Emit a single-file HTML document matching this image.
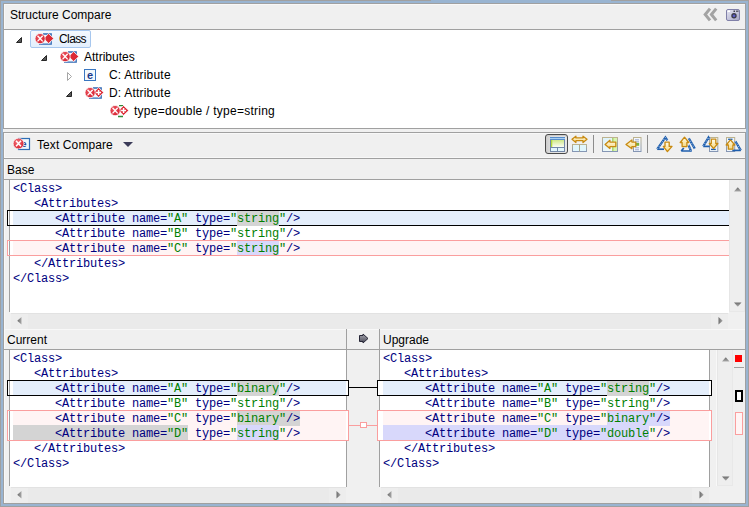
<!DOCTYPE html><html><head><meta charset="utf-8"><style>
html,body{margin:0;padding:0;width:749px;height:507px;overflow:hidden;background:#a0a0a0}
.a{position:absolute}
.ui{font-family:"Liberation Sans",sans-serif;font-size:12px;line-height:14px;color:#000;white-space:nowrap}
.m{font-family:"Liberation Mono",monospace;font-size:12px;letter-spacing:-0.2px;line-height:15px;white-space:pre;color:#000080}
.m .n{color:#000080}
.m .g{color:#008000}
</style></head><body><div class="a" style="left:0px;top:0px;width:749px;height:507px;background:#a0a0a0;"></div>
<div class="a" style="left:1px;top:1px;width:747px;height:505px;background:#99b4d1;"></div>
<div class="a" style="left:431px;top:0px;width:180px;height:1px;background:#99b4d1;"></div>
<div class="a" style="left:3px;top:3px;width:743px;height:126px;background:#a0a0a0;"></div>
<div class="a" style="left:4px;top:4px;width:741px;height:124px;background:#ffffff;"></div>
<div class="a" style="left:4px;top:4px;width:741px;height:25px;background:#f0f0f0;"></div>
<div class="a" style="left:4px;top:4px;width:741px;height:1px;background:#f8f8f8;"></div>
<div class="a" style="left:4px;top:4px;width:1px;height:25px;background:#f8f8f8;"></div>
<div class="a" style="left:4px;top:29px;width:741px;height:1px;background:#a0a0a0;"></div>
<div class="a" style="left:3px;top:129px;width:743px;height:3px;background:#f0f0f0;"></div>
<div class="a" style="left:3px;top:132px;width:743px;height:372px;background:#a0a0a0;"></div>
<div class="a" style="left:4px;top:133px;width:741px;height:370px;background:#f0f0f0;"></div>
<div class="a" style="left:4px;top:133px;width:741px;height:1px;background:#f8f8f8;"></div>
<div class="a" style="left:4px;top:133px;width:1px;height:370px;background:#f8f8f8;"></div>
<div class="a ui" style="left:10px;top:8px;">Structure Compare</div>
<div class="a" style="left:30px;top:30px;width:59px;height:16px;border:1px solid #a7c7ee;border-radius:2px;background:linear-gradient(#f4f9fe,#e3effc)"></div>
<svg class="a" style="left:16px;top:37px" width="7" height="7"><path d="M0.5 5.5 L5.5 0.5 L5.5 5.5 Z" fill="#595959" stroke="#262626" stroke-width="1" stroke-linejoin="round"/></svg>
<svg class="a" style="left:35px;top:33px" width="21" height="14"><defs><radialGradient id="rg35_33" cx="0.4" cy="0.4" r="0.65"><stop offset="0" stop-color="#ee5a66"/><stop offset="1" stop-color="#d41c2a"/></radialGradient></defs><path d="M8 1 H16.2 V11.2 H4" fill="#f4f8fc" stroke="#3068b4" stroke-width="1.3"/><path d="M8.6 5.5 L13.6 0.6 L18.8 5.5 L13.6 10.4 Z" fill="#dc2a36" stroke="#ffffff" stroke-width="0.8"/><circle cx="5.1" cy="5.6" r="5.1" fill="url(#rg35_33)" stroke="#ffffff" stroke-width="0.8"/><path d="M2.5 2.8 L7.7 8.4 M7.7 2.8 L2.5 8.4" stroke="#fff" stroke-width="1.3"/></svg>
<div class="a ui tr" style="left:59px;top:32px;letter-spacing:-0.6px">Class</div>
<svg class="a" style="left:41px;top:55px" width="7" height="7"><path d="M0.5 5.5 L5.5 0.5 L5.5 5.5 Z" fill="#595959" stroke="#262626" stroke-width="1" stroke-linejoin="round"/></svg>
<svg class="a" style="left:60px;top:51px" width="21" height="14"><defs><radialGradient id="rg60_51" cx="0.4" cy="0.4" r="0.65"><stop offset="0" stop-color="#ee5a66"/><stop offset="1" stop-color="#d41c2a"/></radialGradient></defs><path d="M8 1 H16.2 V11.2 H4" fill="#f4f8fc" stroke="#3068b4" stroke-width="1.3"/><path d="M8.6 5.5 L13.6 0.6 L18.8 5.5 L13.6 10.4 Z" fill="#dc2a36" stroke="#ffffff" stroke-width="0.8"/><circle cx="5.1" cy="5.6" r="5.1" fill="url(#rg60_51)" stroke="#ffffff" stroke-width="0.8"/><path d="M2.5 2.8 L7.7 8.4 M7.7 2.8 L2.5 8.4" stroke="#fff" stroke-width="1.3"/></svg>
<div class="a ui tr" style="left:84px;top:50px;">Attributes</div>
<svg class="a" style="left:67px;top:72px" width="7" height="10"><path d="M0.5 0.5 L4.5 4.5 L0.5 8.5 Z" fill="#ffffff" stroke="#a6a6a6" stroke-width="1"/></svg>
<svg class="a" style="left:84px;top:69px" width="12" height="12"><rect x="0.5" y="0.5" width="11" height="11" fill="#f2f8fc" stroke="#3a76c0" stroke-width="1"/><text x="6" y="9.6" text-anchor="middle" font-family="Liberation Sans" font-weight="bold" font-size="11" fill="#1a3a8a">e</text></svg>
<div class="a ui tr" style="left:109px;top:68px;letter-spacing:0.2px">C: Attribute</div>
<svg class="a" style="left:66px;top:91px" width="7" height="7"><path d="M0.5 5.5 L5.5 0.5 L5.5 5.5 Z" fill="#595959" stroke="#262626" stroke-width="1" stroke-linejoin="round"/></svg>
<svg class="a" style="left:85px;top:87px" width="21" height="14"><defs><radialGradient id="rg85_87" cx="0.4" cy="0.4" r="0.65"><stop offset="0" stop-color="#ee5a66"/><stop offset="1" stop-color="#d41c2a"/></radialGradient></defs><path d="M8 1 H16.2 V11.2 H4" fill="#f4f8fc" stroke="#3068b4" stroke-width="1.3"/><path d="M8.6 5.5 L13.6 0.6 L18.8 5.5 L13.6 10.4 Z" fill="#dc2a36" stroke="#ffffff" stroke-width="0.8"/><path d="M13.6 3 V8 M11.1 5.5 H16.1" stroke="#fff" stroke-width="1.5"/><circle cx="5.1" cy="5.6" r="5.1" fill="url(#rg85_87)" stroke="#ffffff" stroke-width="0.8"/><path d="M2.5 2.8 L7.7 8.4 M7.7 2.8 L2.5 8.4" stroke="#fff" stroke-width="1.3"/></svg>
<div class="a ui tr" style="left:109px;top:86px;letter-spacing:0.2px">D: Attribute</div>
<svg class="a" style="left:110px;top:105px" width="21" height="14"><defs><radialGradient id="rg110_105" cx="0.4" cy="0.4" r="0.65"><stop offset="0" stop-color="#ee5a66"/><stop offset="1" stop-color="#d41c2a"/></radialGradient></defs><path d="M9 0.7 H13 M8 11.5 H13" fill="none" stroke="#2f8a3a" stroke-width="1.3"/><path d="M8.6 5.5 L13.6 0.6 L18.8 5.5 L13.6 10.4 Z" fill="#dc2a36" stroke="#ffffff" stroke-width="0.8"/><path d="M13.6 3 V8 M11.1 5.5 H16.1" stroke="#fff" stroke-width="1.5"/><circle cx="5.1" cy="5.6" r="5.1" fill="url(#rg110_105)" stroke="#ffffff" stroke-width="0.8"/><path d="M2.5 2.8 L7.7 8.4 M7.7 2.8 L2.5 8.4" stroke="#fff" stroke-width="1.3"/></svg>
<div class="a ui tr" style="left:134px;top:104px;letter-spacing:0.25px">type=double / type=string</div>
<svg class="a" style="left:700px;top:6px" width="20" height="18"><path d="M10 2.6 L5.2 8.5 L10 14.4 M16.2 2.6 L11.4 8.5 L16.2 14.4" fill="none" stroke="#a3a3a3" stroke-width="3"/></svg>
<svg class="a" style="left:725px;top:8px" width="16" height="14"><defs><linearGradient id="cam" x1="0" y1="0" x2="1" y2="1"><stop offset="0" stop-color="#e8e8f4"/><stop offset="1" stop-color="#a4a4c4"/></linearGradient></defs><rect x="1.5" y="1.5" width="13" height="11" rx="1.5" fill="url(#cam)" stroke="#8080a8" stroke-width="1"/><path d="M2.5 2.5 H5 V4 H2.5 Z" fill="#ffffff"/><rect x="8.5" y="2.5" width="1.5" height="1.5" fill="#404050"/><rect x="11" y="2.5" width="2.5" height="1.5" fill="#606070"/><circle cx="9" cy="7.8" r="2.7" fill="#3a3a48"/><circle cx="9" cy="7.8" r="1.4" fill="#5c5cc8"/></svg>
<div class="a" style="left:4px;top:157px;width:741px;height:1px;background:#f8f8f8;"></div>
<div class="a" style="left:4px;top:158px;width:741px;height:1px;background:#a0a0a0;"></div>
<svg class="a" style="left:12px;top:137px" width="20" height="14"><rect x="6.5" y="1.5" width="11" height="11" fill="#eef7fc" stroke="#2f6db4" stroke-width="1.2"/><text x="12" y="10" text-anchor="middle" font-family="Liberation Sans" font-weight="bold" font-size="9" fill="#1f3f8f">e</text><defs><radialGradient id="rgt" cx="0.4" cy="0.35" r="0.7"><stop offset="0" stop-color="#f3737b"/><stop offset="1" stop-color="#d81e2c"/></radialGradient></defs><circle cx="6.5" cy="6.5" r="5.3" fill="url(#rgt)" stroke="#fff" stroke-width="0.6"/><path d="M4 3.8 L9 9.2 M9 3.8 L4 9.2" stroke="#fff" stroke-width="1.5"/></svg>
<div class="a ui" style="left:37px;top:138px;letter-spacing:0.1px">Text Compare</div>
<svg class="a" style="left:122px;top:141px" width="12" height="8"><path d="M1 1 H11 L6 6 Z" fill="#3b3b58"/></svg>
<div class="a" style="left:545px;top:134px;width:21px;height:18px;border:1px solid #4a4a4a;border-radius:3px;background:linear-gradient(90deg,#cdcdcd,#e0e0e0 25%,#e8e8e8);box-shadow:inset 0 1px 1px #c8c8c8"></div>
<svg class="a" style="left:548px;top:134px" width="20" height="20"><defs><linearGradient id="g1" x1="0" y1="0" x2="0" y2="1"><stop offset="0" stop-color="#cfe888"/><stop offset="1" stop-color="#fbfdf4"/></linearGradient><linearGradient id="g1b" x1="0" y1="0" x2="0" y2="1"><stop offset="0" stop-color="#2e6cb8"/><stop offset="0.5" stop-color="#a8d0f4"/><stop offset="1" stop-color="#2e6cb8"/></linearGradient></defs><rect x="2.5" y="3.5" width="14" height="14" fill="#e2f6fc" stroke="#7388a8"/><rect x="2" y="3" width="15" height="3" fill="url(#g1b)"/><rect x="3" y="6" width="13" height="7" fill="url(#g1)"/><rect x="3" y="6" width="1.3" height="7" fill="#b4dc3c"/><path d="M2.5 13.5 H16.5 M9.5 13.5 V17.5" stroke="#7388a8" stroke-width="1"/></svg>
<svg class="a" style="left:570px;top:134px" width="20" height="20"><defs><linearGradient id="af2" x1="0" y1="0" x2="0" y2="1"><stop offset="0" stop-color="#fffdf0"/><stop offset="1" stop-color="#f6d77a"/></linearGradient></defs><path d="M2 5.3 L5.9 2.2 V3.9 H13 V2.2 L17 5.3 L13 8.5 V6.7 H5.9 V8.5 Z" fill="url(#af2)" stroke="#c88a10" stroke-width="1.3" stroke-linejoin="round"/><defs><linearGradient id="db2" x1="0" y1="0" x2="0" y2="1"><stop offset="0" stop-color="#bdb38f"/><stop offset="1" stop-color="#8596b4"/></linearGradient></defs><rect x="2.5" y="10.5" width="14" height="7" fill="#e0f6fd" stroke="url(#db2)"/><path d="M9.5 10.5 V17.5" stroke="#a8a88e"/></svg>
<div class="a" style="left:593px;top:135px;width:1px;height:18px;background:#8c8c8c;"></div>
<svg class="a" style="left:600px;top:134px" width="20" height="20"><defs><linearGradient id="db3" x1="0" y1="0" x2="0" y2="1"><stop offset="0" stop-color="#bdb38f"/><stop offset="1" stop-color="#8596b4"/></linearGradient></defs><defs><linearGradient id="g3" x1="0" y1="0" x2="1" y2="1"><stop offset="0" stop-color="#daf2fc"/><stop offset="1" stop-color="#f8fbf4"/></linearGradient></defs><rect x="2.5" y="3.5" width="15" height="14" fill="url(#g3)" stroke="url(#db3)"/><rect x="13" y="4" width="4" height="13" fill="#d8f4b0"/><path d="M12.8 4 V17" stroke="#9ccc58" stroke-width="1.2"/><defs><linearGradient id="af3" x1="0" y1="0" x2="0" y2="1"><stop offset="0" stop-color="#fffdf0"/><stop offset="1" stop-color="#f6d77a"/></linearGradient></defs><path d="M5.1 10.5 L9.9 6.3 V8.1 H15.8 V12.6 H9.9 V14.6 Z" fill="url(#af3)" stroke="#c88a10" stroke-width="1.3" stroke-linejoin="round"/></svg>
<svg class="a" style="left:624px;top:134px" width="20" height="20"><defs><linearGradient id="db4" x1="0" y1="0" x2="0" y2="1"><stop offset="0" stop-color="#bdb38f"/><stop offset="1" stop-color="#8596b4"/></linearGradient></defs><rect x="9.5" y="3.5" width="7.5" height="14" fill="#f4f8fc" stroke="url(#db4)"/><path d="M11 5.8 H15 M11 7.8 H15 M11 13.8 H15 M11 15.8 H15" stroke="#9aa8d0"/><rect x="11.8" y="8.9" width="3.4" height="2.9" fill="#7cb040"/><defs><linearGradient id="af4" x1="0" y1="0" x2="0" y2="1"><stop offset="0" stop-color="#fffdf0"/><stop offset="1" stop-color="#f6d77a"/></linearGradient></defs><path d="M2 10.5 L7.9 5.9 V8.1 H11.8 V12.6 H7.9 V14.8 Z" fill="url(#af4)" stroke="#c88a10" stroke-width="1.3" stroke-linejoin="round"/></svg>
<div class="a" style="left:647px;top:135px;width:1px;height:18px;background:#8c8c8c;"></div>
<svg class="a" style="left:654px;top:134px" width="20" height="20"><path d="M3.2 15.2 H10" fill="none" stroke="#1f5fae" stroke-width="1.7"/><path d="M3.2 15.2 L11.4 3.4 L13.4 6.3" fill="none" stroke="#1f5fae" stroke-width="2.2"/><path d="M3.2 15.2 L11.4 3.4 L13.4 6.3" fill="none" stroke="#dfe9f6" stroke-width="0.7" stroke-dasharray="1.2 1.6"/><defs><linearGradient id="af5" x1="0" y1="0" x2="0" y2="1"><stop offset="0" stop-color="#fffdf0"/><stop offset="1" stop-color="#f6d77a"/></linearGradient></defs><path d="M11 8.1 H15.2 V12.4 H18 L13.4 17.6 L9.3 12.4 H11 Z" fill="url(#af5)" stroke="#c88a10" stroke-width="1.3" stroke-linejoin="round"/></svg>
<svg class="a" style="left:678px;top:134px" width="20" height="20"><path d="M3.2 17 H13.8 M3.2 17 L5.8 14" fill="none" stroke="#1f5fae" stroke-width="1.7"/><path d="M10.5 11 L13 17 M10.8 4.3 L16.8 14.6" fill="none" stroke="#1f5fae" stroke-width="2.2"/><path d="M10.5 11 L13 17 M10.8 4.3 L16.8 14.6" fill="none" stroke="#dfe9f6" stroke-width="0.7" stroke-dasharray="1.2 1.6"/><defs><linearGradient id="af6" x1="0" y1="0" x2="0" y2="1"><stop offset="0" stop-color="#fffdf0"/><stop offset="1" stop-color="#f6d77a"/></linearGradient></defs><path d="M6.5 3.2 L10.8 8.5 H8.9 V12.6 H4.1 V8.5 H2.2 Z" fill="url(#af6)" stroke="#c88a10" stroke-width="1.3" stroke-linejoin="round"/></svg>
<svg class="a" style="left:701px;top:134px" width="20" height="20"><defs><linearGradient id="db7" x1="0" y1="0" x2="0" y2="1"><stop offset="0" stop-color="#bdb38f"/><stop offset="1" stop-color="#8596b4"/></linearGradient></defs><rect x="8.5" y="3.5" width="8.3" height="14" fill="#eef4fa" stroke="url(#db7)"/><path d="M2.2 12.4 H8.7" fill="none" stroke="#1f5fae" stroke-width="1.7"/><path d="M2.2 12.4 L7.5 3.4 L8.6 5.5" fill="none" stroke="#1f5fae" stroke-width="2.2"/><path d="M2.2 12.4 L7.5 3.4 L8.6 5.5" fill="none" stroke="#dfe9f6" stroke-width="0.7" stroke-dasharray="1.2 1.6"/><path d="M10 15.4 H14.8" stroke="#1f5fae" stroke-width="1.3"/><defs><linearGradient id="af7" x1="0" y1="0" x2="0" y2="1"><stop offset="0" stop-color="#fffdf0"/><stop offset="1" stop-color="#f6d77a"/></linearGradient></defs><path d="M10.3 5.1 H14.8 V9.5 H16.8 L12.6 14.6 L8.3 9.5 H10.3 Z" fill="url(#af7)" stroke="#c88a10" stroke-width="1.3" stroke-linejoin="round"/></svg>
<svg class="a" style="left:724px;top:134px" width="20" height="20"><defs><linearGradient id="db8" x1="0" y1="0" x2="0" y2="1"><stop offset="0" stop-color="#bdb38f"/><stop offset="1" stop-color="#8596b4"/></linearGradient></defs><rect x="2.5" y="3.5" width="8.2" height="14" fill="#eef4fa" stroke="url(#db8)"/><path d="M4.1 5.3 H8.5" stroke="#1f5fae" stroke-width="1.3"/><path d="M8.3 16.4 H16.8" fill="none" stroke="#1f5fae" stroke-width="1.7"/><path d="M11.4 7.3 L16.8 16.4" fill="none" stroke="#1f5fae" stroke-width="2.2"/><path d="M11.4 7.3 L16.8 16.4" fill="none" stroke="#dfe9f6" stroke-width="0.7" stroke-dasharray="1.2 1.6"/><defs><linearGradient id="af8" x1="0" y1="0" x2="0" y2="1"><stop offset="0" stop-color="#fffdf0"/><stop offset="1" stop-color="#f6d77a"/></linearGradient></defs><path d="M6.5 5.9 L10.8 11 H8.9 V15.2 H4.3 V11 H2.2 Z" fill="url(#af8)" stroke="#c88a10" stroke-width="1.3" stroke-linejoin="round"/></svg>
<div class="a ui" style="left:7px;top:163px;">Base</div>
<div class="a" style="left:4px;top:179px;width:741px;height:1px;background:#a0a0a0;"></div>
<div class="a" style="left:10px;top:180px;width:719px;height:133px;background:#ffffff;"></div>
<div class="a" style="left:9px;top:180px;width:1px;height:132px;background:#a0a0a0;"></div>
<div class="a" style="left:7px;top:210px;width:722px;height:16px;background:#000000;"></div>
<div class="a" style="left:8px;top:211px;width:721px;height:14px;background:#ffffff;"></div>
<div class="a" style="left:13px;top:211px;width:716px;height:14px;background:#e4eefb;"></div>
<div class="a" style="left:9px;top:211px;width:1px;height:14px;background:#a0a0a0;"></div>
<div class="a" style="left:7px;top:240px;width:722px;height:16px;background:#fa9e9e;"></div>
<div class="a" style="left:8px;top:241px;width:721px;height:14px;background:#ffffff;"></div>
<div class="a" style="left:13px;top:241px;width:716px;height:14px;background:#fff4f4;"></div>
<div class="a" style="left:9px;top:241px;width:1px;height:14px;background:#a0a0a0;"></div>
<div class="a" style="left:237px;top:211px;width:42px;height:15px;background:#d4d4d4;"></div>
<div class="a" style="left:237px;top:241px;width:42px;height:14px;background:#d8d8fb;"></div>
<div class="a m" style="left:13px;top:182px"><span class="n">&lt;Class&gt;</span></div><div class="a m" style="left:13px;top:197px"><span class="n">   &lt;Attributes&gt;</span></div><div class="a m" style="left:13px;top:212px"><span class="n">      &lt;Attribute name=</span><span class="g">"A"</span><span class="n"> type=</span><span class="g">"string"</span><span class="n">/&gt;</span></div><div class="a m" style="left:13px;top:227px"><span class="n">      &lt;Attribute name=</span><span class="g">"B"</span><span class="n"> type=</span><span class="g">"string"</span><span class="n">/&gt;</span></div><div class="a m" style="left:13px;top:242px"><span class="n">      &lt;Attribute name=</span><span class="g">"C"</span><span class="n"> type=</span><span class="g">"string"</span><span class="n">/&gt;</span></div><div class="a m" style="left:13px;top:257px"><span class="n">   &lt;/Attributes&gt;</span></div><div class="a m" style="left:13px;top:272px"><span class="n">&lt;/Class&gt;</span></div>
<div class="a" style="left:729px;top:180px;width:16px;height:132px;background:#eeeeee;"></div><div class="a" style="left:729px;top:180px;width:1px;height:132px;background:#e6e6e6;"></div><div class="a" style="left:744px;top:180px;width:1px;height:132px;background:#e8e8e8;"></div><div class="a" style="left:729px;top:311px;width:16px;height:1px;background:#e8e8e8;"></div>
<svg class="a" style="left:734px;top:187px" width="9" height="5"><defs><linearGradient id="ua734_187" x1="0" y1="0" x2="0" y2="1"><stop offset="0" stop-color="#6c6c6c"/><stop offset="1" stop-color="#a8a8a8"/></linearGradient></defs><path d="M0 4.5 L3.5 0.5 L4 0.5 L7.5 4.5 Z" fill="url(#ua734_187)"/></svg>
<svg class="a" style="left:734px;top:302px" width="9" height="5"><defs><linearGradient id="da734_302" x1="0" y1="0" x2="0" y2="1"><stop offset="0" stop-color="#6c6c6c"/><stop offset="1" stop-color="#a8a8a8"/></linearGradient></defs><path d="M0 0.5 L7.5 0.5 L4 4.5 L3.5 4.5 Z" fill="url(#da734_302)"/></svg>
<div class="a" style="left:11px;top:313px;width:717px;height:16px;background:#eaeaea;"></div><div class="a" style="left:11px;top:313px;width:717px;height:1px;background:#e2e2e2;"></div><div class="a" style="left:11px;top:314px;width:17px;height:15px;background:#ededed;"></div><div class="a" style="left:711px;top:314px;width:17px;height:15px;background:#ededed;"></div>
<svg class="a" style="left:17px;top:317px" width="5" height="8"><defs><linearGradient id="la17_317" x1="0" y1="0" x2="1" y2="0"><stop offset="0" stop-color="#6c6c6c"/><stop offset="1" stop-color="#a8a8a8"/></linearGradient></defs><path d="M4.5 0 L4.5 7.5 L0.5 4 L0.5 3.5 Z" fill="url(#la17_317)"/></svg>
<svg class="a" style="left:718px;top:317px" width="5" height="8"><defs><linearGradient id="ra718_317" x1="0" y1="0" x2="1" y2="0"><stop offset="0" stop-color="#6c6c6c"/><stop offset="1" stop-color="#a8a8a8"/></linearGradient></defs><path d="M0.5 0 L0.5 7.5 L4.5 4 L4.5 3.5 Z" fill="url(#ra718_317)"/></svg>
<div class="a" style="left:4px;top:329px;width:741px;height:1px;background:#f8f8f8;"></div>
<div class="a" style="left:4px;top:349px;width:741px;height:1px;background:#a0a0a0;"></div>
<div class="a" style="left:346px;top:329px;width:1px;height:158px;background:#a0a0a0;"></div>
<div class="a" style="left:379px;top:329px;width:1px;height:158px;background:#a0a0a0;"></div>
<div class="a ui" style="left:7px;top:333px;">Current</div>
<div class="a ui" style="left:383px;top:333px;">Upgrade</div>
<svg class="a" style="left:358px;top:333px" width="12" height="11"><defs><linearGradient id="ga" x1="0" y1="0" x2="0" y2="1"><stop offset="0" stop-color="#a6a6ae"/><stop offset="1" stop-color="#4a4a58"/></linearGradient></defs><path d="M1.5 2.5 H5 V1 L10 5.5 L5 10 V8.5 H1.5 Z" fill="url(#ga)" stroke="#262636" stroke-width="1" stroke-linejoin="round"/></svg>
<div class="a" style="left:10px;top:350px;width:336px;height:137px;background:#ffffff;"></div>
<div class="a" style="left:9px;top:350px;width:1px;height:136px;background:#a0a0a0;"></div>
<div class="a" style="left:380px;top:350px;width:329px;height:137px;background:#ffffff;"></div>
<div class="a" style="left:709px;top:350px;width:1px;height:137px;background:#a0a0a0;"></div>
<div class="a" style="left:7px;top:380px;width:342px;height:16px;background:#000000;"></div>
<div class="a" style="left:8px;top:381px;width:340px;height:14px;background:#ffffff;"></div>
<div class="a" style="left:13px;top:381px;width:333px;height:14px;background:#e4eefb;"></div>
<div class="a" style="left:9px;top:381px;width:1px;height:14px;background:#a0a0a0;"></div>
<div class="a" style="left:7px;top:410px;width:342px;height:31px;background:#fa9e9e;"></div>
<div class="a" style="left:8px;top:411px;width:340px;height:29px;background:#ffffff;"></div>
<div class="a" style="left:13px;top:411px;width:333px;height:29px;background:#fff4f4;"></div>
<div class="a" style="left:9px;top:411px;width:1px;height:29px;background:#a0a0a0;"></div>
<div class="a" style="left:237px;top:381px;width:42px;height:15px;background:#d4d4d4;"></div>
<div class="a" style="left:237px;top:411px;width:63px;height:15px;background:#d4d4d4;"></div>
<div class="a" style="left:13px;top:425px;width:175px;height:15px;background:#d4d4d4;"></div>
<div class="a" style="left:237px;top:425px;width:42px;height:15px;background:#d8d8fb;"></div>
<div class="a" style="left:377px;top:380px;width:335px;height:16px;background:#000000;"></div>
<div class="a" style="left:378px;top:381px;width:333px;height:14px;background:#ffffff;"></div>
<div class="a" style="left:383px;top:381px;width:326px;height:14px;background:#e4eefb;"></div>
<div class="a" style="left:377px;top:410px;width:335px;height:31px;background:#fa9e9e;"></div>
<div class="a" style="left:378px;top:411px;width:333px;height:29px;background:#ffffff;"></div>
<div class="a" style="left:383px;top:411px;width:326px;height:29px;background:#fff4f4;"></div>
<div class="a" style="left:607px;top:381px;width:42px;height:15px;background:#d4d4d4;"></div>
<div class="a" style="left:607px;top:411px;width:63px;height:15px;background:#d8d8fb;"></div>
<div class="a" style="left:383px;top:425px;width:266px;height:15px;background:#d8d8fb;"></div>
<div class="a" style="left:349px;top:387px;width:28px;height:1px;background:#000000;"></div>
<div class="a" style="left:349px;top:425px;width:28px;height:1px;background:#fa9e9e;"></div>
<div class="a" style="left:360px;top:422px;width:5px;height:4px;border:1px solid #fa9e9e;background:#fff"></div>
<div class="a m" style="left:13px;top:352px"><span class="n">&lt;Class&gt;</span></div><div class="a m" style="left:13px;top:367px"><span class="n">   &lt;Attributes&gt;</span></div><div class="a m" style="left:13px;top:382px"><span class="n">      &lt;Attribute name=</span><span class="g">"A"</span><span class="n"> type=</span><span class="g">"binary"</span><span class="n">/&gt;</span></div><div class="a m" style="left:13px;top:397px"><span class="n">      &lt;Attribute name=</span><span class="g">"B"</span><span class="n"> type=</span><span class="g">"string"</span><span class="n">/&gt;</span></div><div class="a m" style="left:13px;top:412px"><span class="n">      &lt;Attribute name=</span><span class="g">"C"</span><span class="n"> type=</span><span class="g">"binary"</span><span class="n">/&gt;</span></div><div class="a m" style="left:13px;top:427px"><span class="n">      &lt;Attribute name=</span><span class="g">"D"</span><span class="n"> type=</span><span class="g">"string"</span><span class="n">/&gt;</span></div><div class="a m" style="left:13px;top:442px"><span class="n">   &lt;/Attributes&gt;</span></div><div class="a m" style="left:13px;top:457px"><span class="n">&lt;/Class&gt;</span></div>
<div class="a m" style="left:383px;top:352px"><span class="n">&lt;Class&gt;</span></div><div class="a m" style="left:383px;top:367px"><span class="n">   &lt;Attributes&gt;</span></div><div class="a m" style="left:383px;top:382px"><span class="n">      &lt;Attribute name=</span><span class="g">"A"</span><span class="n"> type=</span><span class="g">"string"</span><span class="n">/&gt;</span></div><div class="a m" style="left:383px;top:397px"><span class="n">      &lt;Attribute name=</span><span class="g">"B"</span><span class="n"> type=</span><span class="g">"string"</span><span class="n">/&gt;</span></div><div class="a m" style="left:383px;top:412px"><span class="n">      &lt;Attribute name=</span><span class="g">"C"</span><span class="n"> type=</span><span class="g">"binary"</span><span class="n">/&gt;</span></div><div class="a m" style="left:383px;top:427px"><span class="n">      &lt;Attribute name=</span><span class="g">"D"</span><span class="n"> type=</span><span class="g">"double"</span><span class="n">/&gt;</span></div><div class="a m" style="left:383px;top:442px"><span class="n">   &lt;/Attributes&gt;</span></div><div class="a m" style="left:383px;top:457px"><span class="n">&lt;/Class&gt;</span></div>
<div class="a" style="left:11px;top:487px;width:335px;height:16px;background:#eaeaea;"></div><div class="a" style="left:11px;top:487px;width:335px;height:1px;background:#e2e2e2;"></div><div class="a" style="left:11px;top:488px;width:17px;height:15px;background:#ededed;"></div><div class="a" style="left:329px;top:488px;width:17px;height:15px;background:#ededed;"></div>
<svg class="a" style="left:17px;top:491px" width="5" height="8"><defs><linearGradient id="la17_491" x1="0" y1="0" x2="1" y2="0"><stop offset="0" stop-color="#6c6c6c"/><stop offset="1" stop-color="#a8a8a8"/></linearGradient></defs><path d="M4.5 0 L4.5 7.5 L0.5 4 L0.5 3.5 Z" fill="url(#la17_491)"/></svg>
<svg class="a" style="left:336px;top:491px" width="5" height="8"><defs><linearGradient id="ra336_491" x1="0" y1="0" x2="1" y2="0"><stop offset="0" stop-color="#6c6c6c"/><stop offset="1" stop-color="#a8a8a8"/></linearGradient></defs><path d="M0.5 0 L0.5 7.5 L4.5 4 L4.5 3.5 Z" fill="url(#ra336_491)"/></svg>
<div class="a" style="left:381px;top:487px;width:328px;height:16px;background:#eaeaea;"></div><div class="a" style="left:381px;top:487px;width:328px;height:1px;background:#e2e2e2;"></div><div class="a" style="left:381px;top:488px;width:17px;height:15px;background:#ededed;"></div><div class="a" style="left:692px;top:488px;width:17px;height:15px;background:#ededed;"></div>
<svg class="a" style="left:387px;top:491px" width="5" height="8"><defs><linearGradient id="la387_491" x1="0" y1="0" x2="1" y2="0"><stop offset="0" stop-color="#6c6c6c"/><stop offset="1" stop-color="#a8a8a8"/></linearGradient></defs><path d="M4.5 0 L4.5 7.5 L0.5 4 L0.5 3.5 Z" fill="url(#la387_491)"/></svg>
<svg class="a" style="left:699px;top:491px" width="5" height="8"><defs><linearGradient id="ra699_491" x1="0" y1="0" x2="1" y2="0"><stop offset="0" stop-color="#6c6c6c"/><stop offset="1" stop-color="#a8a8a8"/></linearGradient></defs><path d="M0.5 0 L0.5 7.5 L4.5 4 L4.5 3.5 Z" fill="url(#ra699_491)"/></svg>
<div class="a" style="left:716px;top:350px;width:1px;height:136px;background:#f8f8f8;"></div>
<div class="a" style="left:717px;top:350px;width:16px;height:136px;background:#eeeeee;"></div><div class="a" style="left:717px;top:350px;width:1px;height:136px;background:#e6e6e6;"></div><div class="a" style="left:732px;top:350px;width:1px;height:136px;background:#e8e8e8;"></div><div class="a" style="left:717px;top:485px;width:16px;height:1px;background:#e8e8e8;"></div>
<svg class="a" style="left:722px;top:357px" width="9" height="5"><defs><linearGradient id="ua722_357" x1="0" y1="0" x2="0" y2="1"><stop offset="0" stop-color="#6c6c6c"/><stop offset="1" stop-color="#a8a8a8"/></linearGradient></defs><path d="M0 4.5 L3.5 0.5 L4 0.5 L7.5 4.5 Z" fill="url(#ua722_357)"/></svg>
<svg class="a" style="left:722px;top:476px" width="9" height="5"><defs><linearGradient id="da722_476" x1="0" y1="0" x2="0" y2="1"><stop offset="0" stop-color="#6c6c6c"/><stop offset="1" stop-color="#a8a8a8"/></linearGradient></defs><path d="M0 0.5 L7.5 0.5 L4 4.5 L3.5 4.5 Z" fill="url(#da722_476)"/></svg>
<div class="a" style="left:735px;top:355px;width:7px;height:7px;background:#ff0000;"></div>
<div class="a" style="left:734px;top:367px;width:10px;height:1px;background:#a0a0a0;"></div>
<div class="a" style="left:735px;top:390px;width:4px;height:8px;border:2px solid #000;background:#fff"></div>
<div class="a" style="left:735px;top:412px;width:6px;height:21px;border:1px solid #fa9e9e;background:#fff4f4"></div></body></html>
